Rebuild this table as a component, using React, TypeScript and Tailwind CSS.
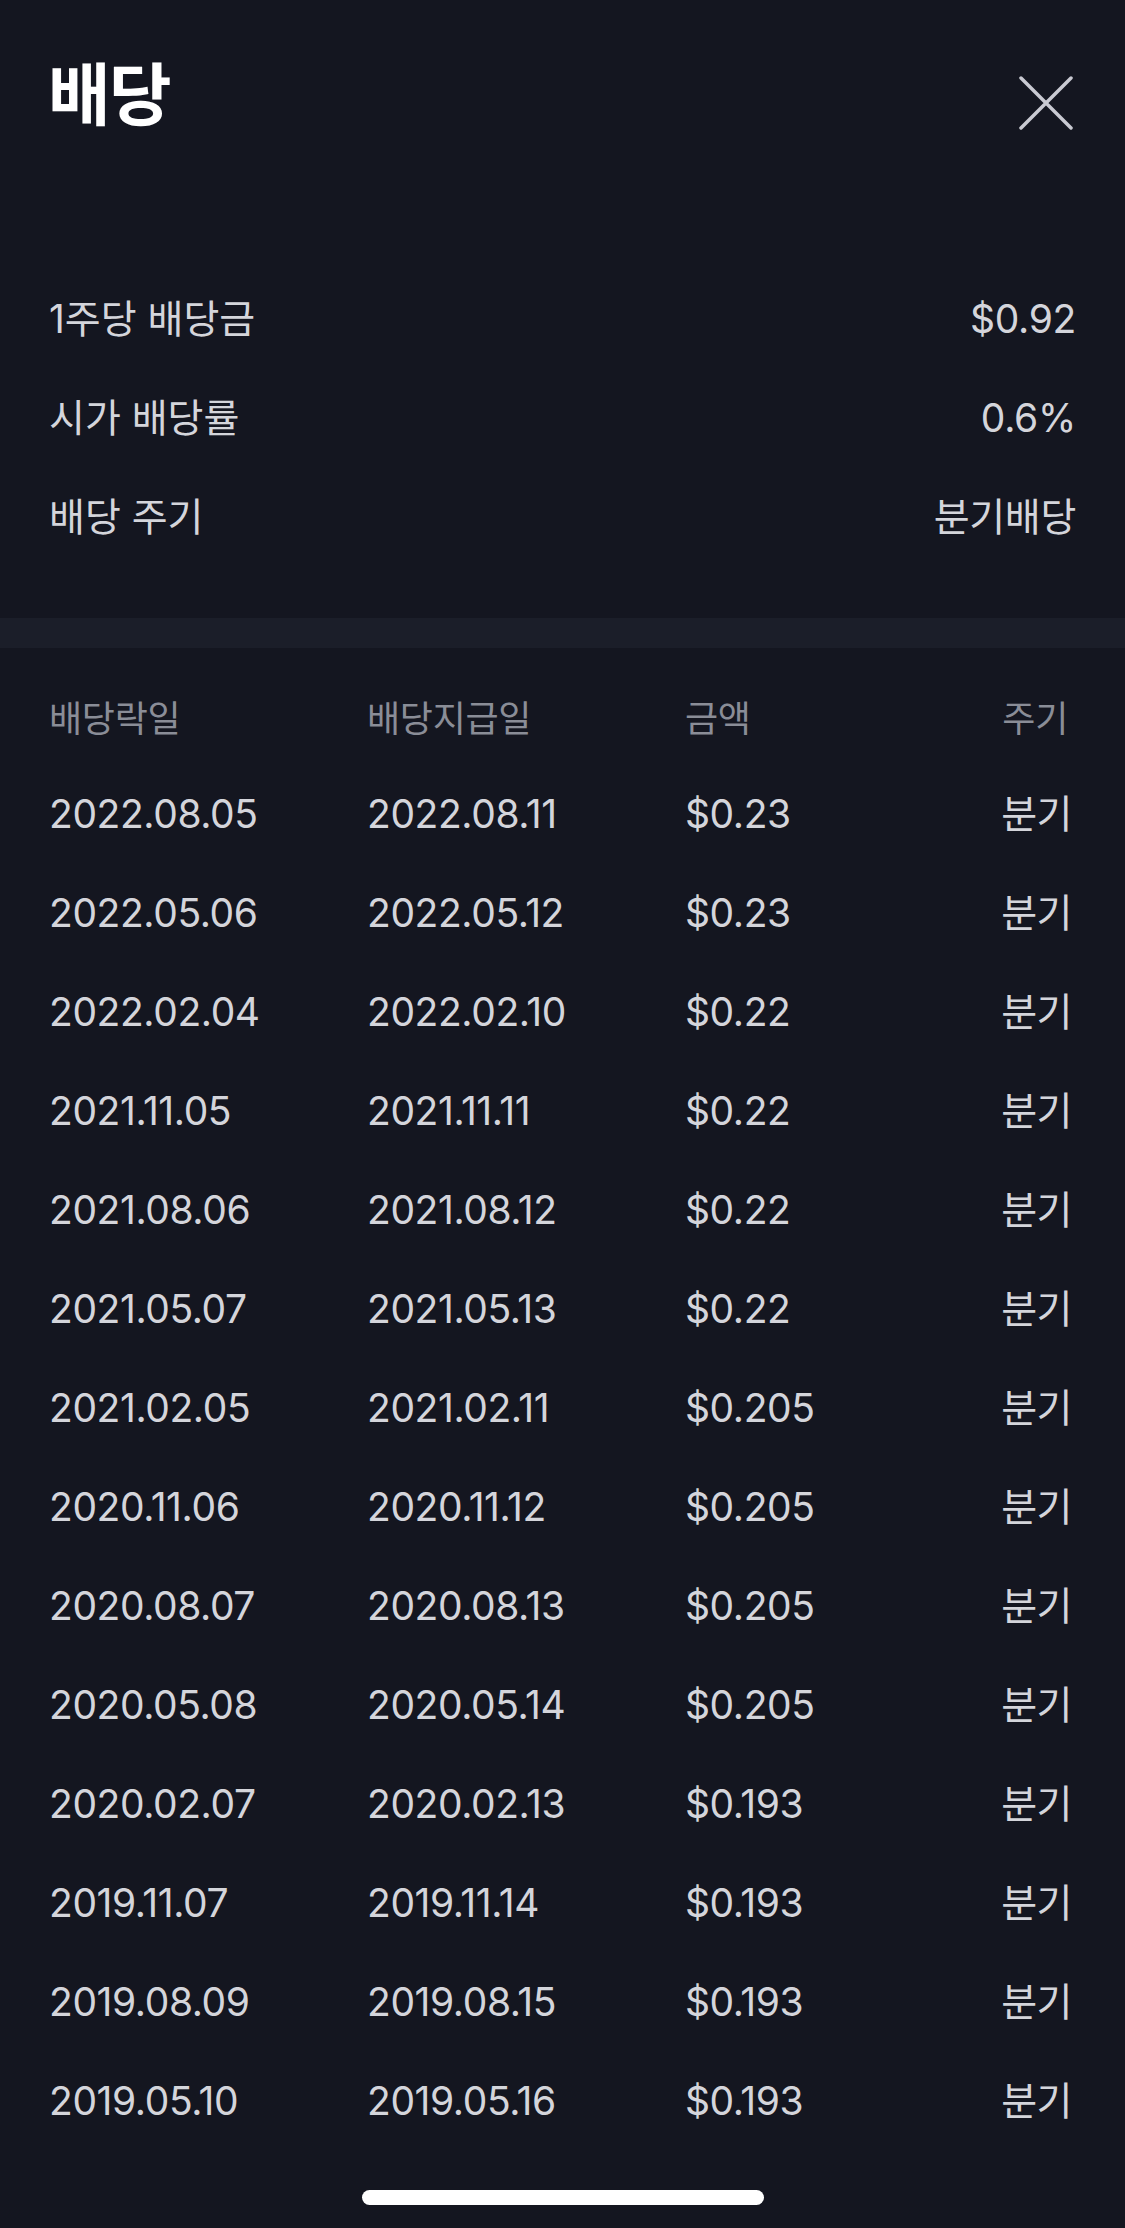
import React from "react";

const rows: [string, string, string][] = [
  ["2022.08.05", "2022.08.11", "$0.23"],
  ["2022.05.06", "2022.05.12", "$0.23"],
  ["2022.02.04", "2022.02.10", "$0.22"],
  ["2021.11.05", "2021.11.11", "$0.22"],
  ["2021.08.06", "2021.08.12", "$0.22"],
  ["2021.05.07", "2021.05.13", "$0.22"],
  ["2021.02.05", "2021.02.11", "$0.205"],
  ["2020.11.06", "2020.11.12", "$0.205"],
  ["2020.08.07", "2020.08.13", "$0.205"],
  ["2020.05.08", "2020.05.14", "$0.205"],
  ["2020.02.07", "2020.02.13", "$0.193"],
  ["2019.11.07", "2019.11.14", "$0.193"],
  ["2019.08.09", "2019.08.15", "$0.193"],
  ["2019.05.10", "2019.05.16", "$0.193"],
];

const info: [string, string][] = [
  ["1주당 배당금", "$0.92"],
  ["시가 배당률", "0.6%"],
  ["배당 주기", "분기배당"],
];

export default function App() {
  return (
    <div
      className="relative w-[1125px] h-[2228px] overflow-hidden bg-[#141620] flex flex-col"
      style={{ fontFamily: '"Inter", "Noto Sans CJK KR", sans-serif' }}
    >
      {/* Header */}
      <div className="h-[270px] flex items-start justify-between pl-[48px] pr-[52px] pt-[54px]">
        <h1 className="text-[68px] leading-[82px] font-bold text-white tracking-[-1.5px]">배당</h1>
        <button className="mt-[22px] w-[54px] h-[54px] flex items-center justify-center">
          <svg width="54" height="54" viewBox="0 0 54 54" fill="none">
            <path d="M2 2 L52 52 M52 2 L2 52" stroke="#c9cad2" strokeWidth="3.5" strokeLinecap="round" />
          </svg>
        </button>
      </div>

      {/* Info */}
      <div className="flex flex-col px-[49px]">
        {info.map(([k, v]) => (
          <div key={k} className="h-[99px] flex items-center justify-between text-[39px] text-[#d4d5db]">
            <span>{k}</span>
            <span className="tracking-[-0.3px]">{v}</span>
          </div>
        ))}
      </div>

      <div className="mt-[51px] h-[30px] bg-[#1b1e29]" />

      {/* Table */}
      <div className="flex flex-col pl-[49px] pr-[53px] pt-[25px]">
        <div className="h-[92px] grid grid-cols-[318px_318px_1fr_auto] items-center text-[36px] text-[#8a8d97] tracking-[-0.3px]">
          <span>배당락일</span>
          <span>배당지급일</span>
          <span>금액</span>
          <span className="pr-[4px]">주기</span>
        </div>
        {rows.map(([a, b, c]) => (
          <div key={a} className="h-[99px] grid grid-cols-[318px_318px_1fr_auto] items-center text-[39px] text-[#d4d5db] tracking-[-0.4px]">
            <span>{a}</span>
            <span>{b}</span>
            <span>{c}</span>
            <span className="tracking-[-0.5px]">분기</span>
          </div>
        ))}
      </div>

      {/* Home indicator */}
      <div className="absolute left-[362px] top-[2190px] w-[402px] h-[15px] rounded-full bg-white" />
    </div>
  );
}
